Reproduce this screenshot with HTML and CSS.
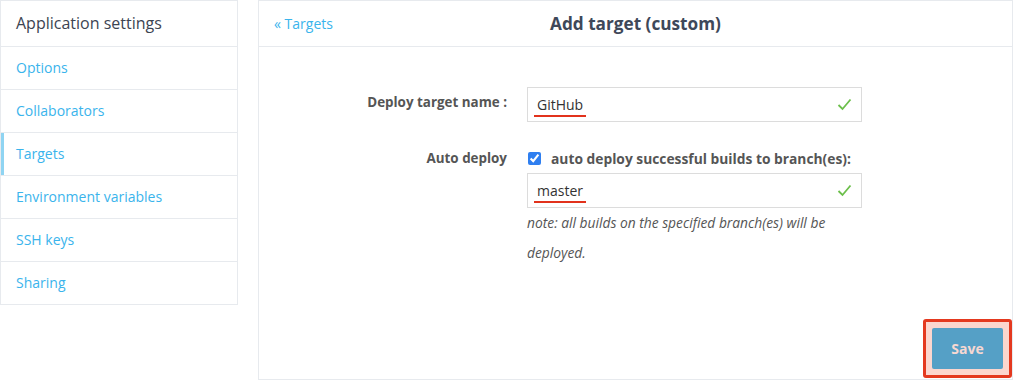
FILE: index.html
```html
<!DOCTYPE html>
<html lang="en">
<head>
    <meta charset="UTF-8">
    <meta name="viewport" content="width=device-width, initial-scale=1.0">
    <title>Add target (custom)</title>
    <link rel="stylesheet" href="styles.css">
</head>
<body>
    <div class="page">
        <div class="sidebar">
            <div class="sidebar-title">Application settings</div>
            <a class="side-link" href="#">Options</a>
            <a class="side-link" href="#">Collaborators</a>
            <a class="side-link active" href="#">Targets</a>
            <a class="side-link" href="#">Environment variables</a>
            <a class="side-link" href="#">SSH keys</a>
            <a class="side-link" href="#">Sharing</a>
        </div>

        <div class="main">
            <div class="main-header">
                <a class="back" href="#">&laquo; Targets</a>
                <h2>Add target (custom)</h2>
                <span></span>
            </div>

            <form class="main-body" id="targetForm">
                <div class="form-row">
                    <label class="form-label">Deploy target name :</label>
                    <div class="form-field">
                        <div class="input">
                            <span class="value">GitHub</span>
                            <svg class="ok" width="15" height="13" viewBox="0 0 15 13"><path d="M1.5 7 L5.5 11 L13.5 1.5" fill="none" stroke="#6cbf4b" stroke-width="1.8"/></svg>
                        </div>
                    </div>
                </div>

                <div class="form-row second">
                    <label class="form-label">Auto deploy</label>
                    <div class="form-field">
                        <div class="check-line">
                            <input type="checkbox" id="autodeploy" checked>
                            <label for="autodeploy">auto deploy successful builds to branch(es):</label>
                        </div>
                        <div class="input">
                            <span class="value">master</span>
                            <svg class="ok" width="15" height="13" viewBox="0 0 15 13"><path d="M1.5 7 L5.5 11 L13.5 1.5" fill="none" stroke="#6cbf4b" stroke-width="1.8"/></svg>
                        </div>
                        <p class="note">note: all builds on the specified branch(es) will be deployed.</p>
                    </div>
                </div>

                <div class="actions">
                    <div class="highlight">
                        <button type="submit" class="btn">Save</button>
                    </div>
                </div>
            </form>
        </div>
    </div>
</body>
</html>
```

FILE: styles.css
```css
body {
    margin: 0;
    font-family: "Open Sans", Arial, sans-serif;
    background-color: #fff;
    color: #555;
}
.page {
    display: flex;
    align-items: flex-start;
    gap: 20px;
    height: 380px;
}
.sidebar {
    width: 236px;
    border: 1px solid #e7eaee;
    display: flex;
    flex-direction: column;
}
.sidebar-title {
    height: 45px;
    line-height: 45px;
    padding-left: 15px;
    font-size: 16px;
    color: #3c4452;
    border-bottom: 1px solid #e7eaee;
}
.side-link {
    height: 42px;
    line-height: 42px;
    padding-left: 15px;
    font-size: 14px;
    color: #3ab4ec;
    text-decoration: none;
    border-bottom: 1px solid #e7eaee;
}
.side-link:last-child {
    border-bottom: none;
}
.side-link.active {
    box-shadow: inset 3px 0 0 #8fd4f2;
}
.main {
    flex: 1;
    height: 378px;
    border: 1px solid #e7eaee;
    display: flex;
    flex-direction: column;
}
.main-header {
    height: 45px;
    border-bottom: 1px solid #e7eaee;
    display: grid;
    grid-template-columns: 1fr auto 1fr;
    align-items: center;
    padding: 0 15px;
}
.back {
    font-size: 14px;
    color: #3ab4ec;
    text-decoration: none;
}
h2 {
    margin: 0;
    font-size: 17.2px;
    font-weight: bold;
    color: #3e4859;
}
.main-body {
    flex: 1;
    display: flex;
    flex-direction: column;
    padding-top: 40px;
}
.form-row {
    display: flex;
    gap: 20px;
}
.form-row.second {
    margin-top: 26px;
}
.form-label {
    width: 248px;
    text-align: right;
    font-size: 13.4px;
    font-weight: bold;
    line-height: 20px;
    padding-top: 5px;
    color: #555;
}
.form-row.second .form-label {
    padding-top: 0;
}
.form-field {
    width: 335px;
}
.input {
    height: 33px;
    border: 1px solid #dcdcdc;
    display: flex;
    align-items: center;
    justify-content: space-between;
    padding: 0 9px 0 9px;
    font-size: 14px;
    color: #333;
}
.value {
    margin-left: -3px;
    padding: 2px 3px 1px;
    border-bottom: 2px solid #e2321c;
    line-height: 19px;
}
.check-line {
    display: flex;
    align-items: center;
    height: 20px;
    margin-bottom: 5px;
    font-size: 13.8px;
    font-weight: bold;
}
.check-line input {
    margin: 0 10px 0 1px;
    width: 13px;
    height: 13px;
    accent-color: #2f7ff0;
}
.note {
    margin: 0;
    font-size: 13.8px;
    font-style: italic;
    line-height: 30px;
    color: #555;
}
.actions {
    margin-top: auto;
    display: flex;
    justify-content: flex-end;
    padding-bottom: 1px;
}
.highlight {
    border: 3px solid #e4391f;
    border-radius: 3px;
    background-color: #fcd6ce;
    padding: 6px;
}
.btn {
    width: 71px;
    height: 41px;
    border: none;
    border-radius: 2px;
    background-color: #55a0c6;
    color: #f7d8d2;
    font-family: "Open Sans", Arial, sans-serif;
    font-size: 14px;
    font-weight: bold;
    cursor: pointer;
}
```
